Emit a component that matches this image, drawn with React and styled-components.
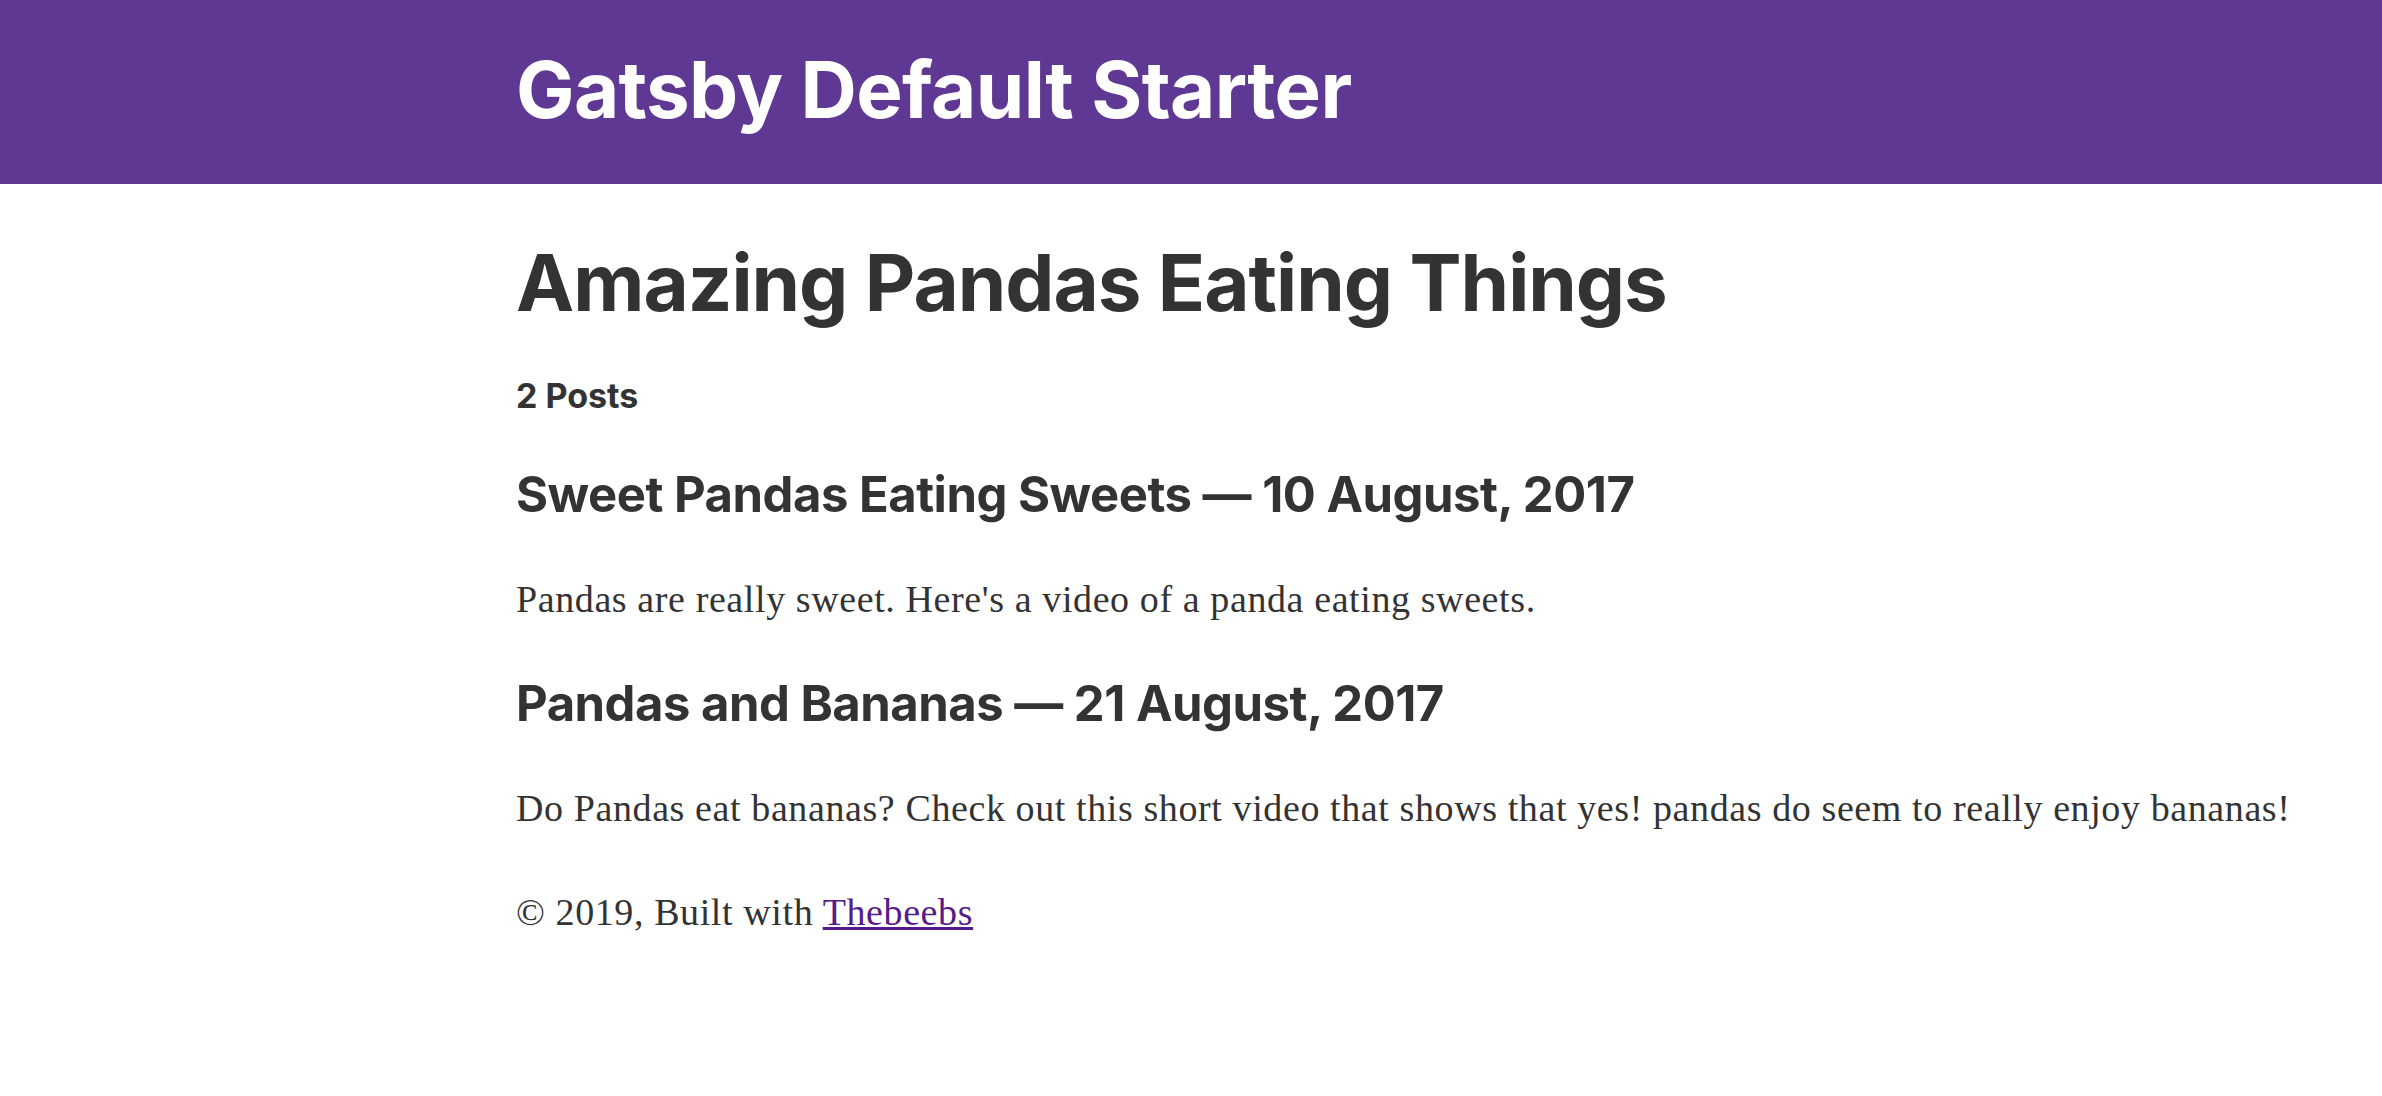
import styled, { createGlobalStyle } from "styled-components";

const GlobalStyle = createGlobalStyle`
  html, body {
    margin: 0;
    padding: 0;
    background: #fff;
  }
  body {
    font-family: "Liberation Serif", Georgia, serif;
    color: #333;
  }
`;

const Header = styled.header`
  background: #5e3893;
  height: 184px;
  box-sizing: border-box;
  padding: 43px 0 0 516px;
`;

const SiteTitle = styled.h1`
  margin: 0;
  font-family: Inter, "Noto Sans", sans-serif;
  font-weight: 700;
  font-size: 78px;
  line-height: 94px;
  letter-spacing: -0.6px;
  color: #fff;
`;

const Main = styled.main`
  padding: 0 40px 0 516px;
`;

const Heading = styled.h1`
  margin: 52px 0 0;
  font-family: Inter, "Noto Sans", sans-serif;
  font-weight: 700;
  font-size: 78px;
  line-height: 94px;
  letter-spacing: -1px;
  color: #333;
`;

const Count = styled.h4`
  margin: 46px 0 0;
  font-family: Inter, "Noto Sans", sans-serif;
  font-weight: 700;
  font-size: 34px;
  line-height: 40px;
  color: #333;
`;

const PostTitle = styled.h3`
  margin: 50px 0 0;
  font-family: Inter, "Noto Sans", sans-serif;
  font-weight: 700;
  font-size: 49px;
  line-height: 58px;
  letter-spacing: -0.5px;
  color: #333;
`;

const Text = styled.p`
  margin: 49px 0 0;
  font-family: "Liberation Serif", Georgia, serif;
  font-size: 38px;
  line-height: 52px;
  letter-spacing: 0.6px;
  color: #333;
`;

const Footer = styled.footer`
  margin: 52px 0 0;
  font-family: "Liberation Serif", Georgia, serif;
  font-size: 38px;
  line-height: 52px;
  letter-spacing: 0.6px;
  color: #333;
`;

const Link = styled.a`
  color: #551a8b;
  text-decoration: underline;
`;

const posts = [
  {
    title: "Sweet Pandas Eating Sweets",
    date: "10 August, 2017",
    excerpt: "Pandas are really sweet. Here's a video of a panda eating sweets.",
  },
  {
    title: "Pandas and Bananas",
    date: "21 August, 2017",
    excerpt:
      "Do Pandas eat bananas? Check out this short video that shows that yes! pandas do seem to really enjoy bananas!",
  },
];

export default function App() {
  return (
    <>
      <GlobalStyle />
      <Header>
        <SiteTitle>Gatsby Default Starter</SiteTitle>
      </Header>
      <Main>
        <Heading>Amazing Pandas Eating Things</Heading>
        <Count>{posts.length} Posts</Count>
        {posts.map((post) => (
          <div key={post.title}>
            <PostTitle>
              {post.title} — {post.date}
            </PostTitle>
            <Text>{post.excerpt}</Text>
          </div>
        ))}
        <Footer>
          © 2019, Built with <Link href="#">Thebeebs</Link>
        </Footer>
      </Main>
    </>
  );
}
